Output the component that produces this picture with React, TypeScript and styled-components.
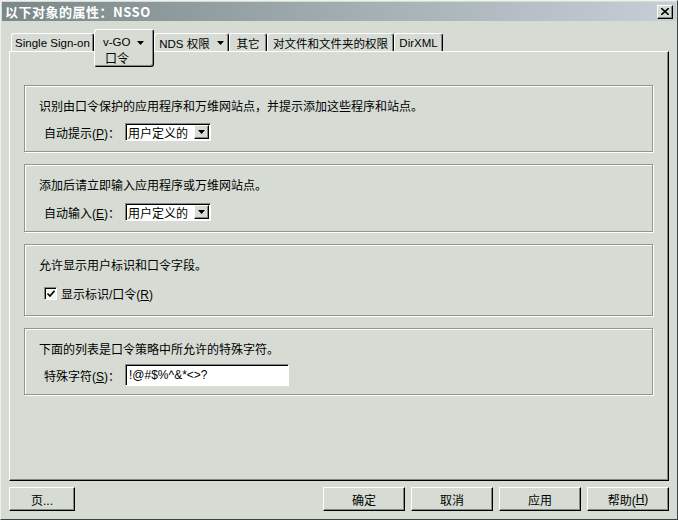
import styled, { createGlobalStyle } from 'styled-components';

const GlobalStyle = createGlobalStyle`
  html, body {
    margin: 0;
    padding: 0;
    background: #d6dcd4;
  }
  body {
    font-family: "Liberation Sans", "Noto Sans CJK SC", sans-serif;
    font-size: 12px;
    color: #000;
  }
  * {
    box-sizing: border-box;
  }
`;

const FACE = '#d6dcd4';
const SHADE = '#808a86';

const Window = styled.div`
  width: 678px;
  height: 520px;
  display: flex;
  flex-direction: column;
  padding: 1px;
  background: ${FACE};
  border: 1px solid;
  border-color: #eef1ec #3a4242 #3a4242 #eef1ec;
`;

const TitleBar = styled.div`
  height: 19px;
  display: flex;
  align-items: center;
  justify-content: space-between;
  padding: 0 3px 0 3px;
  background: linear-gradient(to right, #7b8888 0%, #a4b0b4 55%, #c6ced6 100%);
`;

const Title = styled.div`
  color: #fff;
  font-weight: bold;
  font-size: 13px;
  letter-spacing: 0.5px;
  font-family: "Noto Sans CJK SC", "Liberation Sans", sans-serif;
`;

const CloseBtn = styled.div`
  width: 16px;
  height: 14px;
  display: flex;
  align-items: center;
  justify-content: center;
  background: ${FACE};
  border: 1px solid;
  border-color: #fff #000 #000 #fff;
  box-shadow: inset -1px -1px ${SHADE};
`;

const Body = styled.div`
  flex: 1;
  display: flex;
  flex-direction: column;
  padding: 8px 7px 0 7px;
`;

const TabStrip = styled.div`
  height: 22px;
  flex-shrink: 0;
  display: flex;
  align-items: flex-start;
  padding-left: 2px;
  position: relative;
  z-index: 2;
`;

const Tab = styled.div<{ $w: number }>`
  width: ${({ $w }) => $w}px;
  height: 18px;
  margin-top: 4px;
  display: flex;
  align-items: center;
  justify-content: center;
  font-size: 11.5px;
  white-space: nowrap;
  border-top: 1px solid #fff;
  border-left: 1px solid #fff;
  border-right: 1px solid #000;
  border-radius: 3px 3px 0 0;
  box-shadow: inset -1px 0 ${SHADE};
`;

const ActiveTab = styled.div<{ $w: number }>`
  width: ${({ $w }) => $w}px;
  height: 38px;
  flex-shrink: 0;
  padding: 4px 0 0 8px;
  background: ${FACE};
  font-size: 11.5px;
  line-height: 16px;
  white-space: nowrap;
  border: 1px solid;
  border-color: #fff #000 #000 #fff;
  border-radius: 3px;
  box-shadow: inset -1px -1px ${SHADE};
`;

const SubPage = styled.span`
  display: block;
  margin-top: 1px;
  padding-left: 2px;
  font-size: 12px;
`;

const Arrow = styled.svg`
  margin-left: 7px;
  vertical-align: middle;
`;

const Panel = styled.div`
  position: relative;
  z-index: 1;
  width: 660px;
  height: 430px;
  flex-shrink: 0;
  display: flex;
  flex-direction: column;
  gap: 12px;
  padding: 33px 14px 0 14px;
  border: 1px solid;
  border-color: #fff #000 #000 #fff;
  box-shadow: inset -1px -1px ${SHADE};
`;

const Group = styled.div<{ $h: number }>`
  width: 629px;
  height: ${({ $h }) => $h}px;
  padding: 12px 0 0 14px;
  border: 1px solid #8a968f;
  box-shadow: inset 1px 1px #fff, 1px 1px #fff;
`;

const Desc = styled.div`
  height: 18px;
  line-height: 18px;
  font-size: 12px;
`;

const FieldRow = styled.div<{ $gap: number; $h: number }>`
  margin-top: ${({ $gap }) => $gap}px;
  height: ${({ $h }) => $h}px;
  display: flex;
  align-items: center;
  padding-left: 5px;
`;

const Label = styled.div`
  width: 81px;
  font-size: 12px;
  white-space: nowrap;
`;

const Combo = styled.div`
  width: 86px;
  height: 18px;
  display: flex;
  align-items: center;
  justify-content: space-between;
  background: #fff;
  border: 1px solid;
  border-color: #808a86 #fff #fff #808a86;
  box-shadow: inset 1px 1px #000;
  padding: 1px 1px 1px 2px;
  font-size: 12px;
`;

const ComboBtn = styled.div`
  width: 15px;
  height: 14px;
  display: flex;
  align-items: center;
  justify-content: center;
  background: ${FACE};
  border: 1px solid;
  border-color: #fff #000 #000 #fff;
  box-shadow: inset -1px -1px ${SHADE};
`;

const TextInput = styled.div`
  width: 164px;
  height: 22px;
  display: flex;
  align-items: center;
  background: #fff;
  border: 1px solid;
  border-color: #808a86 #fff #fff #808a86;
  box-shadow: inset 1px 1px #000;
  padding-left: 3px;
  font-size: 12px;
`;

const CheckBox = styled.div`
  width: 13px;
  height: 13px;
  display: flex;
  align-items: center;
  justify-content: center;
  background: #f4f6f2;
  border: 1px solid;
  border-color: #808a86 #fff #fff #808a86;
  box-shadow: inset 1px 1px #000;
  margin-right: 4px;
`;

const CheckText = styled.div`
  font-size: 12px;
`;

const ButtonRow = styled.div`
  margin-top: 6px;
  height: 24px;
  flex-shrink: 0;
  display: flex;
  gap: 6px;
`;

const DlgButton = styled.div<{ $w: number; $push?: boolean }>`
  width: ${({ $w }) => $w}px;
  height: 24px;
  display: flex;
  align-items: center;
  justify-content: center;
  margin-left: ${({ $push }) => ($push ? 'auto' : '0')};
  background: ${FACE};
  border: 1px solid;
  border-color: #fff #000 #000 #fff;
  box-shadow: inset -1px -1px ${SHADE};
  font-size: 12px;
`;

const DownTri = () => (
  <Arrow width={7} height={4} viewBox="0 0 7 4">
    <polygon points="0,0 7,0 3.5,4" fill="#000" />
  </Arrow>
);

const ComboArrow = () => (
  <ComboBtn>
    <svg width="7" height="4" viewBox="0 0 7 4">
      <polygon points="0,0 7,0 3.5,4" fill="#000" />
    </svg>
  </ComboBtn>
);

const App = () => {
  return (
    <>
      <GlobalStyle />
      <Window>
        <TitleBar>
          <Title>以下对象的属性：NSSO</Title>
          <CloseBtn>
            <svg width="8" height="7" viewBox="0 0 8 7">
              <path d="M0 0 L8 7 M8 0 L0 7" stroke="#000" strokeWidth="1.6" />
            </svg>
          </CloseBtn>
        </TitleBar>
        <Body>
          <TabStrip>
            <Tab $w={83}>Single Sign-on</Tab>
            <ActiveTab $w={60}>
              v-GO
              <DownTri />
              <SubPage>口令</SubPage>
            </ActiveTab>
            <Tab $w={75}>
              NDS 权限
              <DownTri />
            </Tab>
            <Tab $w={38}>其它</Tab>
            <Tab $w={127}>对文件和文件夹的权限</Tab>
            <Tab $w={49}>DirXML</Tab>
          </TabStrip>
          <Panel>
            <Group $h={67}>
              <Desc>识别由口令保护的应用程序和万维网站点，并提示添加这些程序和站点。</Desc>
              <FieldRow $gap={7} $h={18}>
                <Label>
                  自动提示(<u>P</u>)：
                </Label>
                <Combo>
                  用户定义的
                  <ComboArrow />
                </Combo>
              </FieldRow>
            </Group>
            <Group $h={68}>
              <Desc>添加后请立即输入应用程序或万维网站点。</Desc>
              <FieldRow $gap={8} $h={18}>
                <Label>
                  自动输入(<u>E</u>)：
                </Label>
                <Combo>
                  用户定义的
                  <ComboArrow />
                </Combo>
              </FieldRow>
            </Group>
            <Group $h={72}>
              <Desc>允许显示用户标识和口令字段。</Desc>
              <FieldRow $gap={10} $h={16}>
                <CheckBox>
                  <svg width="8" height="7" viewBox="0 0 8 7">
                    <path d="M0.5 3.5 L3 6 L7.5 0.8" stroke="#000" strokeWidth="1.6" fill="none" />
                  </svg>
                </CheckBox>
                <CheckText>
                  显示标识/口令(<u>R</u>)
                </CheckText>
              </FieldRow>
            </Group>
            <Group $h={67}>
              <Desc>下面的列表是口令策略中所允许的特殊字符。</Desc>
              <FieldRow $gap={5} $h={22}>
                <Label>
                  特殊字符(<u>S</u>)：
                </Label>
                <TextInput>!@#$%^&amp;*&lt;&gt;?</TextInput>
              </FieldRow>
            </Group>
          </Panel>
          <ButtonRow>
            <DlgButton $w={66}>页...</DlgButton>
            <DlgButton $w={82} $push>
              确定
            </DlgButton>
            <DlgButton $w={82}>取消</DlgButton>
            <DlgButton $w={82}>应用</DlgButton>
            <DlgButton $w={82}>
              帮助(<u>H</u>)
            </DlgButton>
          </ButtonRow>
        </Body>
      </Window>
    </>
  );
};

export default App;
